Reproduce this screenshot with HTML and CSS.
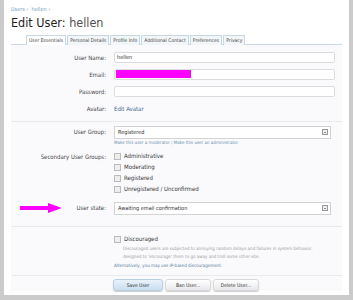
FILE: index.html
```html
<!DOCTYPE html>
<html lang="en">
<head>
  <meta charset="UTF-8" />
  <title>Edit User: hellen</title>
  <link rel="stylesheet" href="styles.css">
</head>
<body>
  <div class="page">
    <div class="crumbs"><a href="#">Users</a> &rsaquo; &nbsp;<a href="#">hellen</a> &rsaquo;</div>
    <h1>Edit User: <span class="name">hellen</span></h1>

    <ul class="tabs">
      <li class="tab active">User Essentials</li>
      <li class="tab">Personal Details</li>
      <li class="tab">Profile Info</li>
      <li class="tab">Additional Contact</li>
      <li class="tab">Preferences</li>
      <li class="tab">Privacy</li>
    </ul>

    <form class="form">
      <div class="row first">
        <label class="lbl">User Name:</label>
        <div class="ctrl"><div class="input">hellen</div></div>
      </div>
      <div class="row">
        <label class="lbl">Email:</label>
        <div class="ctrl"><div class="input"><span class="redact"></span></div></div>
      </div>
      <div class="row">
        <label class="lbl">Password:</label>
        <div class="ctrl"><div class="input"></div></div>
      </div>
      <div class="row">
        <label class="lbl">Avatar:</label>
        <div class="ctrl"><a class="link" href="#">Edit Avatar</a></div>
      </div>

      <hr class="sep" />

      <div class="row group">
        <label class="lbl">User Group:</label>
        <div class="ctrl">
          <div class="select">Registered<span class="drop"></span></div>
          <div class="hint"><a href="#">Make this user a moderator</a> / <a href="#">Make this user an administrator</a></div>
        </div>
      </div>
      <div class="row groups">
        <label class="lbl">Secondary User Groups:</label>
        <div class="ctrl checks">
          <div class="check"><span class="box"></span>Administrative</div>
          <div class="check"><span class="box"></span>Moderating</div>
          <div class="check"><span class="box"></span>Registered</div>
          <div class="check"><span class="box"></span>Unregistered / Unconfirmed</div>
        </div>
      </div>
      <div class="row state">
        <label class="lbl">
          <svg class="arrow" width="42" height="10" viewBox="0 0 42 10">
            <rect x="0" y="3" width="30" height="4" fill="#f0f"/>
            <polygon points="28,0 42,5 28,10" fill="#f0f"/>
          </svg>
          User state:
        </label>
        <div class="ctrl"><div class="select">Awaiting email confirmation<span class="drop"></span></div></div>
      </div>

      <hr class="sep wide" />

      <div class="row disc">
        <div class="lbl"></div>
        <div class="ctrl">
          <div class="check"><span class="box"></span>Discouraged</div>
          <p class="explain">Discouraged users are subjected to annoying random delays and failures in system behavior, designed to 'encourage' them to go away and troll some other site.</p>
          <p class="alt"><a href="#">Alternatively, you may use IP-based discouragement.</a></p>
        </div>
      </div>

      <hr class="sep last" />

      <div class="buttons">
        <button type="button" class="btn primary">Save User</button>
        <button type="button" class="btn">Ban User...</button>
        <button type="button" class="btn">Delete User...</button>
      </div>
    </form>
  </div>
</body>
</html>
```

FILE: styles.css
```css
body {
  margin: 0;
  padding: 0;
  background: #cbcbcb;
  font-family: "DejaVu Sans Condensed", "DejaVu Sans", sans-serif;
  color: #333;
}
a {
  color: #3f6b8f;
  text-decoration: none;
}
.page {
  margin: 0 4px;
  height: 295px;
  background: #fff;
  padding: 0 7px;
  overflow: hidden;
}
.crumbs {
  padding-top: 6px;
  font-size: 5.5px;
  color: #8aa5bf;
}
.crumbs a {
  color: #7a9cbc;
}
h1 {
  margin: 3px 0 0 0;
  font-size: 12.5px;
  font-weight: normal;
  color: #1e1e1e;
  line-height: 16px;
}
h1 .name {
  color: #505050;
}

/* tabs */
.tabs {
  list-style: none;
  margin: 4px 0 0 0;
  padding: 0 0 0 15px;
  display: flex;
  gap: 1px;
  border-bottom: 1px solid #c9dbe4;
}
.tab {
  font-size: 5px;
  line-height: 8px;
  padding: 0 2px;
  border: 1px solid #c6d8e2;
  border-bottom: none;
  background: #f2f6f9;
  color: #444;
  margin-bottom: -1px;
}
.tab.active {
  background: #fff;
  height: 9px;
}

/* form */
.form {
  background: #fafafd;
  margin: 0;
  padding: 1px 0 0 0;
}
.row {
  display: grid;
  grid-template-columns: 95px 1fr;
  column-gap: 8px;
  align-items: start;
  margin-top: 6px;
}
.lbl {
  text-align: right;
  font-size: 6px;
  line-height: 11px;
  color: #444;
  display: flex;
  justify-content: flex-end;
  align-items: center;
  gap: 14px;
}
.ctrl {
  font-size: 6px;
  padding-right: 7px;
}
.input {
  height: 9px;
  border: 1px solid #dcdcdc;
  border-radius: 2px;
  background: #fff;
  font-size: 5.5px;
  line-height: 9px;
  padding: 0 2px;
}
.redact {
  display: inline-block;
  width: 75px;
  height: 8px;
  background: #f0f;
  vertical-align: top;
  margin-left: -1px;
}
.link {
  line-height: 11px;
  font-size: 6px;
}
.sep {
  border: none;
  border-top: 1px solid #e9e9ee;
  margin: 7px 0 0 0;
}
.sep.wide {
  margin-top: 11px;
}
.sep.last {
  margin-top: 6px;
}
.select {
  position: relative;
  height: 11px;
  border: 1px solid #d3d3d3;
  background: #fff;
  font-size: 5.5px;
  line-height: 11px;
  padding: 0 3px;
  margin-right: 4px;
}
.drop {
  position: absolute;
  right: 2px;
  top: 2px;
  width: 6px;
  height: 6px;
  border: 1px solid #999;
  background: #eee;
  box-sizing: border-box;
}
.drop::after {
  content: "";
  position: absolute;
  left: 1px;
  top: 2px;
  border-left: 1px solid transparent;
  border-right: 1px solid transparent;
  border-top: 1px solid #333;
}
.hint {
  font-size: 4.5px;
  line-height: 7px;
  color: #7b9bb5;
}
.hint a {
  color: #6b8ea9;
}
.group {
  margin-top: 4px;
}
.groups {
  margin-top: 5px;
}
.checks .check + .check {
  margin-top: 1px;
}
.check {
  display: flex;
  align-items: center;
  gap: 3px;
  font-size: 6px;
  line-height: 10px;
  color: #333;
}
.box {
  width: 5px;
  height: 5px;
  border: 1px solid #bbb;
  background: #eee;
}
.state {
  margin-top: 8px;
}
.arrow {
  display: block;
}
.disc {
  margin-top: 7px;
}
.explain {
  margin: 1px 0 0 9px;
  padding-right: 14px;
  font-size: 4.5px;
  line-height: 8px;
  color: #a0a0a0;
}
.alt {
  margin: 1px 0 0 0;
  font-size: 4.5px;
  line-height: 7px;
}
.alt a {
  color: #55809f;
}
.buttons {
  display: flex;
  gap: 2px;
  padding: 3px 0 0 102px;
}
.btn {
  font-family: inherit;
  font-size: 5px;
  height: 12px;
  padding: 0 4px;
  width: 46px;
  border: 1px solid #d8d8d8;
  border-radius: 3px;
  background: linear-gradient(#fff, #e8e8ec);
  color: #333;
  box-shadow: 0 1px 1px #ccc;
}
.btn.primary {
  background: linear-gradient(#e9f2fa, #c9deef);
  border-color: #b8cfe2;
  width: 50px;
}
```
